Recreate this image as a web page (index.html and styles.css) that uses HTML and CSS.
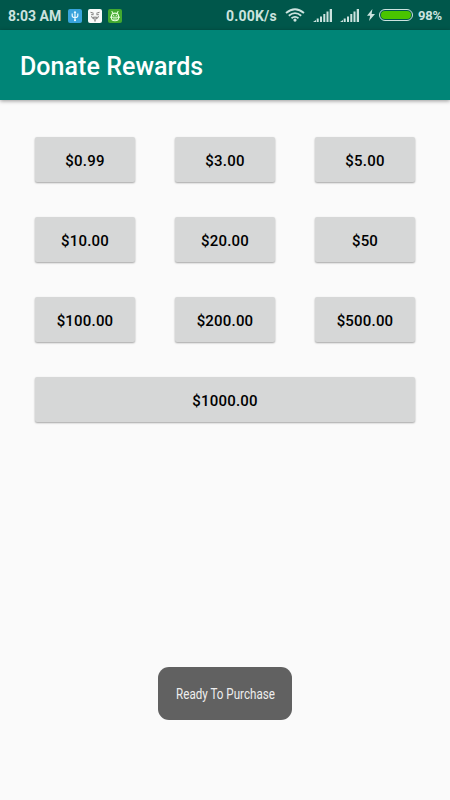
FILE: index.html
```
<!DOCTYPE html>
<html lang="en">
<head>
    <title>Donate Rewards</title>
    <meta charset="UTF-8">
    <meta name="viewport" content="width=device-width, initial-scale=1">
    <link rel="stylesheet" href="styles.css">
</head>
<body>
    <div class="status-bar">
        <span class="time">8:03 AM</span>
        <div class="notifications">
            <svg class="app-icon" viewBox="0 0 14 14">
                <rect width="14" height="14" rx="2" fill="#38a3dc"/>
                <path d="M7 2.5V12M4.2 4.5v2.2q0 1.8 2.8 1.8t2.8-1.8V4.5" fill="none" stroke="#e9faff" stroke-width="1.2"/>
                <path d="M5.6 4L7 2l1.4 2z" fill="#e9faff"/>
                <circle cx="7" cy="11.2" r="1" fill="#e9faff"/>
            </svg>
            <svg class="app-icon" viewBox="0 0 14 14">
                <rect width="14" height="14" rx="2" fill="#f8faf9"/>
                <path d="M2.5 3.3l3.2 1M11.5 3.3l-3.2 1M3.2 5.7h2.4M8.4 5.7h2.4M3 7.6q1.4 1.4 4 .5 2.6.9 4-.5M4.5 9.4q2.5 1.4 5 0" fill="none" stroke="#555" stroke-width=".8"/>
                <path d="M6.5 10.8h1v1.8h-1z" fill="#555"/>
            </svg>
            <svg class="app-icon" viewBox="0 0 14 14">
                <rect width="14" height="14" rx="2" fill="#43a92f"/>
                <path d="M3.8 2l1 2.4M10.2 2l-1 2.4M2 8.2h10" stroke="#e5ffdc" stroke-width="1"/>
                <path d="M3.4 7.5a3.6 3.4 0 0 1 7.2 0v1a3.6 3.3 0 0 1-7.2 0z" fill="none" stroke="#e5ffdc" stroke-width="1.1"/>
                <path d="M5 6.3h1.3M7.7 6.3H9M5 10h4" stroke="#e5ffdc" stroke-width="1"/>
            </svg>
        </div>
        <span class="speed">0.00K/s</span>
        <svg class="wifi" viewBox="0 0 20 14">
            <path d="M1 5q9-7.6 18 0M3.8 7.7q6.2-5.2 12.4 0M6.5 10.3q3.5-2.8 7 0" fill="none" stroke="#cce3df" stroke-width="1.8"/>
            <circle cx="10" cy="12.1" r="1.6" fill="#cce3df"/>
        </svg>
        <svg class="signal" viewBox="0 0 19 13">
            <path d="M0 13l3-2v2zM3.7 9.5h2V13h-2zM7 7.5h2V13H7zM10.3 5h2v8h-2zM13.5 2.5h2V13h-2zM16.7 0H19v13h-2.3z" fill="#cce3df"/>
        </svg>
        <svg class="signal" viewBox="0 0 19 13">
            <path d="M0 13l3-2v2zM3.7 9.5h2V13h-2zM7 7.5h2V13H7zM10.3 5h2v8h-2zM13.5 2.5h2V13h-2zM16.7 0H19v13h-2.3z" fill="#cce3df"/>
        </svg>
        <svg class="bolt" viewBox="0 0 8 12">
            <path d="M5.4 0L0 6.8h3.2L2 12l6-7H4.6z" fill="#cce3df"/>
        </svg>
        <div class="battery"></div>
        <span class="percent">98%</span>
    </div>

    <header class="app-bar">
        <h1>Donate Rewards</h1>
    </header>

    <main class="rewards">
        <button>$0.99</button>
        <button>$3.00</button>
        <button>$5.00</button>
        <button>$10.00</button>
        <button>$20.00</button>
        <button>$50</button>
        <button>$100.00</button>
        <button>$200.00</button>
        <button>$500.00</button>
        <button class="wide">$1000.00</button>
    </main>

    <div class="toast"><span>Ready To Purchase</span></div>
</body>
</html>
```
FILE: styles.css
```
* {
    box-sizing: border-box;
}
body {
    margin: 0;
    height: 100vh;
    overflow: hidden;
    background: #fafafa;
    font-family: Roboto, "Liberation Sans", sans-serif;
}
.status-bar {
    display: flex;
    align-items: center;
    height: 30px;
    padding: 1px 8px 0;
    background: #00574b;
    color: #cce3df;
    font-size: 14px;
    font-weight: bold;
    white-space: nowrap;
}
.status-bar svg {
    flex: none;
}
.time {
    width: 60px;
}
.notifications {
    display: flex;
    gap: 6px;
}
.app-icon {
    width: 14px;
    height: 14px;
}
.speed {
    width: 59px;
    margin-left: auto;
    letter-spacing: 0.2px;
}
.wifi {
    width: 20px;
    height: 14px;
    margin-right: 8px;
    margin-top: -1px;
}
.signal {
    width: 19px;
    height: 13px;
    margin-right: 8px;
}
.bolt {
    width: 8px;
    height: 12px;
    margin-right: 4px;
    margin-top: -1px;
}
.battery {
    width: 34px;
    height: 12px;
    border: 1px solid #cce3df;
    border-radius: 6px;
    padding: 1px;
    margin-top: -1px;
}
.battery::before {
    content: "";
    display: block;
    height: 8px;
    border-radius: 4px;
    background: #49c500;
}
.percent {
    width: 24px;
    margin-left: 5px;
    font-size: 13px;
    letter-spacing: -0.2px;
}
.app-bar {
    display: flex;
    align-items: center;
    height: 70px;
    padding: 2px 20px 0;
    background: #008577;
    color: #fff;
    box-shadow: 0 1px 4px rgba(0, 0, 0, 0.4);
}
h1 {
    margin: 0;
    font-size: 25px;
    font-weight: 500;
    letter-spacing: 0.05px;
}
.rewards {
    display: grid;
    grid-template-columns: repeat(3, 100px);
    grid-auto-rows: 45px;
    gap: 35px 40px;
    padding: 37px 35px 0;
}
button {
    padding: 2px 0 0;
    border: none;
    border-radius: 2px;
    background: #d6d7d7;
    color: #000;
    font: 500 15px Roboto, "Liberation Sans", sans-serif;
    letter-spacing: 0.2px;
    box-shadow: 0 1px 2px rgba(0, 0, 0, 0.35);
}
.wide {
    grid-column: 1 / -1;
}
.toast {
    position: absolute;
    left: 158px;
    top: 667px;
    display: flex;
    align-items: center;
    justify-content: center;
    width: 134px;
    height: 53px;
    border-radius: 11px;
    background: #616161;
    color: #eee;
    font-size: 14px;
    white-space: nowrap;
}
/* condensed lettering */
.toast span {
    transform: scaleX(0.83);
}
```
